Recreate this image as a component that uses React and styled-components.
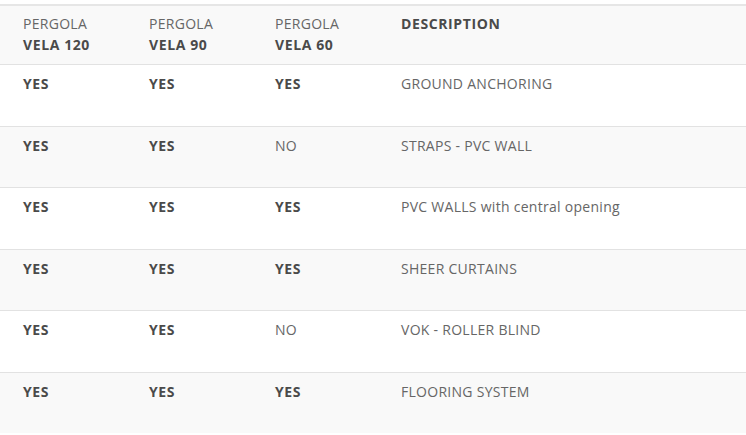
import styled, { createGlobalStyle } from 'styled-components';

const GlobalStyle = createGlobalStyle`
  body {
    margin: 0;
    background: #fff;
    font-family: "Open Sans", "Liberation Sans", sans-serif;
  }
`;

const Wrapper = styled.div`
  padding-top: 4px;
`;

const Table = styled.div`
  border-top: 2px solid #e6e6e6;
`;

const Row = styled.div`
  display: grid;
  grid-template-columns: 126px 126px 126px 1fr;
  padding-left: 23px;
  height: ${props => (props.head ? '59px' : props.last ? '60px' : '61.5px')};
  box-sizing: border-box;
  background: ${props => (props.shaded ? '#f9f9f9' : '#fff')};
  border-bottom: ${props => (props.last ? 'none' : '1.5px solid #e2e2e2')};
`;

const Cell = styled.div`
  padding-top: ${props => (props.head ? '7px' : '8px')};
  font-size: 14px;
  line-height: 21px;
  color: ${props => (props.bold ? '#4a4a4a' : '#666')};
  font-weight: ${props => (props.bold ? 700 : 400)};
  letter-spacing: ${props => (props.bold ? '0.6px' : '0.28px')};
`;

const Strong = styled.span`
  display: block;
  font-weight: 700;
  color: #4a4a4a;
  letter-spacing: 0.6px;
`;

const rows = [
  ['YES', 'YES', 'YES', 'GROUND ANCHORING'],
  ['YES', 'YES', 'NO', 'STRAPS - PVC WALL'],
  ['YES', 'YES', 'YES', 'PVC WALLS with central opening'],
  ['YES', 'YES', 'YES', 'SHEER CURTAINS'],
  ['YES', 'YES', 'NO', 'VOK - ROLLER BLIND'],
  ['YES', 'YES', 'YES', 'FLOORING SYSTEM'],
];

const App = () => (
  <Wrapper>
    <GlobalStyle />
    <Table>
      <Row head shaded>
        <Cell head>PERGOLA<Strong>VELA 120</Strong></Cell>
        <Cell head>PERGOLA<Strong>VELA 90</Strong></Cell>
        <Cell head>PERGOLA<Strong>VELA 60</Strong></Cell>
        <Cell head bold>DESCRIPTION</Cell>
      </Row>
      {rows.map((r, i) => (
        <Row key={i} shaded={i % 2 === 1} last={i === rows.length - 1}>
          {r.slice(0, 3).map((v, j) => (
            <Cell key={j} bold={v === 'YES'}>{v}</Cell>
          ))}
          <Cell>{r[3]}</Cell>
        </Row>
      ))}
    </Table>
  </Wrapper>
);

export default App;
